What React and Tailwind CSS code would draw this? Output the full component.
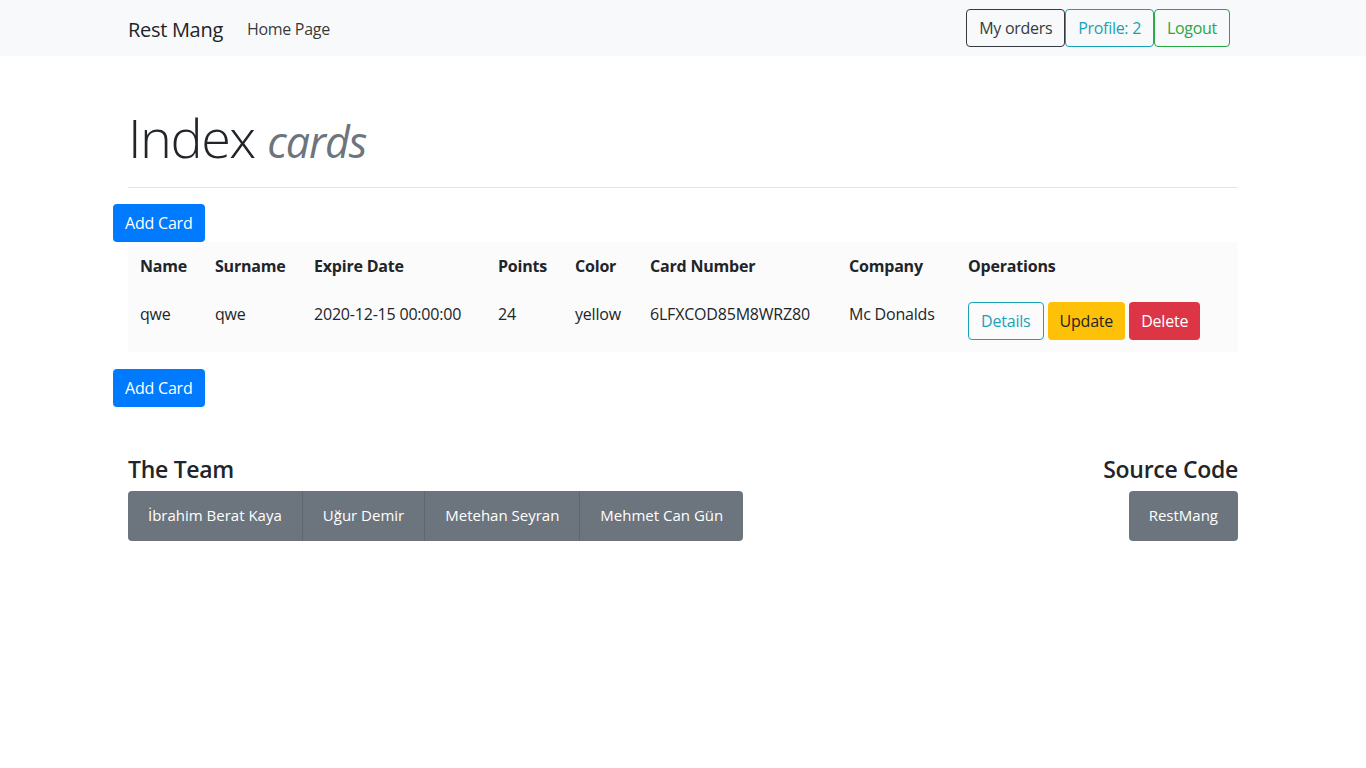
const cols = [
  { label: 'Name', w: 'w-[75px]' },
  { label: 'Surname', w: 'w-[99px]' },
  { label: 'Expire Date', w: 'w-[184px]' },
  { label: 'Points', w: 'w-[77px]' },
  { label: 'Color', w: 'w-[75px]' },
  { label: 'Card Number', w: 'w-[199px]' },
  { label: 'Company', w: 'w-[119px]' },
  { label: 'Operations', w: 'flex-1' },
];

const row = ['qwe', 'qwe', '2020-12-15 00:00:00', '24', 'yellow', '6LFXCOD85M8WRZ80', 'Mc Donalds'];

const team = ['İbrahim Berat Kaya', 'Uğur Demir', 'Metehan Seyran', 'Mehmet Can Gün'];

function AddCard() {
  return (
    <button className="h-[38px] px-3 -ml-[15px] rounded bg-[#007bff] text-white text-base tracking-[-0.2px]">
      Add Card
    </button>
  );
}

export default function App() {
  return (
    <div className="min-h-screen bg-white text-[#212529] font-['Open_Sans',sans-serif]">
      {/* Navbar */}
      <nav className="h-14 bg-[#f8f9fa]">
        <div className="w-[1110px] mx-auto h-full flex items-center">
          <span className="text-xl mr-6 pt-[3px] tracking-[-0.3px]">Rest Mang</span>
          <span className="text-base text-black/80 pt-[1px] tracking-[-0.3px]">Home Page</span>
          <div className="ml-auto mr-2 flex tracking-[-0.3px]">
            <button className="h-[38px] px-3 rounded border border-[#343a40] text-[#343a40] text-base">My orders</button>
            <button className="h-[38px] px-3 rounded border border-[#17a2b8] text-[#17a2b8] text-base">Profile: 2</button>
            <button className="h-[38px] px-3 rounded border border-[#28a745] text-[#28a745] text-base">Logout</button>
          </div>
        </div>
      </nav>

      <main className="w-[1110px] mx-auto">
        <h1 className="mt-12 h-[67px] text-[54px] font-light leading-[67px] tracking-[-1.5px] text-[#212529]">
          Index <small className="italic text-[#6c757d] text-[43px] font-normal tracking-[-1px]">cards</small>
        </h1>
        <hr className="mt-4 mb-4 border-t border-black/10" />

        <AddCard />

        {/* Table */}
        <div className="bg-[#fbfbfb] text-base tracking-[-0.2px]">
          <div className="flex font-bold h-12 items-center">
            {cols.map((c) => (
              <div key={c.label} className={`${c.w} px-3`}>{c.label}</div>
            ))}
          </div>
          <div className="flex h-[62px] pt-3">
            {row.map((v, i) => (
              <div key={i} className={`${cols[i].w} px-3 leading-6`}>{v}</div>
            ))}
            <div className="flex-1 px-3 flex gap-1">
              <button className="h-[38px] px-3 rounded border border-[#17a2b8] text-[#17a2b8]">Details</button>
              <button className="h-[38px] px-3 rounded bg-[#ffc107] text-[#212529]">Update</button>
              <button className="h-[38px] px-3 rounded bg-[#dc3545] text-white">Delete</button>
            </div>
          </div>
        </div>

        <div className="mt-[17px]">
          <AddCard />
        </div>

        {/* Footer */}
        <div className="mt-[49px] flex justify-between">
          <div>
            <h4 className="text-[23px] font-semibold leading-[1.2] mb-[7px] tracking-[-0.3px]">The Team</h4>
            <div className="flex rounded overflow-hidden">
              {team.map((t, i) => (
                <button
                  key={t}
                  className={`h-[50px] px-5 bg-[#6c757d] text-white text-[15px] ${i > 0 ? 'border-l border-[#5f666d]' : ''}`}
                >
                  {t}
                </button>
              ))}
            </div>
          </div>
          <div className="flex flex-col items-end">
            <h4 className="text-[23px] font-semibold leading-[1.2] mb-[7px] tracking-[-0.3px]">Source Code</h4>
            <button className="h-[50px] px-5 rounded bg-[#6c757d] text-white text-[15px]">RestMang</button>
          </div>
        </div>
      </main>
    </div>
  );
}
